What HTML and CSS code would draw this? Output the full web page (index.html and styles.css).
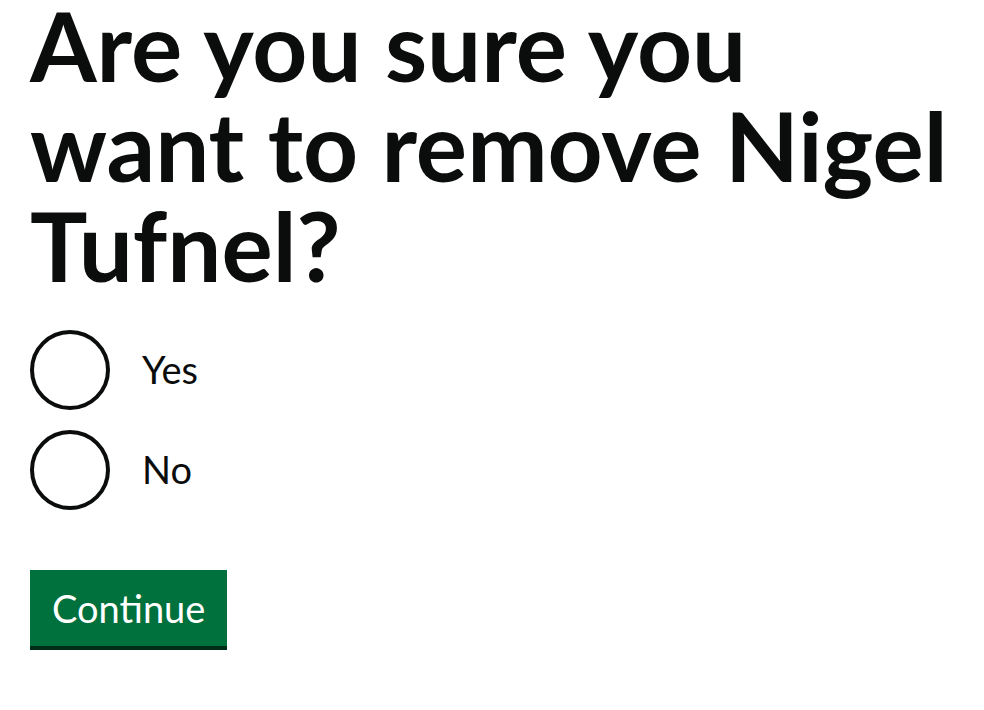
FILE: index.html
```html
<!DOCTYPE html>
<html lang="en">
<head>
<meta charset="utf-8">
<title>Remove Nigel Tufnel</title>
<link rel="stylesheet" href="styles.css">
</head>
<body>
<main class="page">
  <form class="form">
    <fieldset class="fieldset">
      <legend class="legend">
        <h1 class="heading">Are you sure you want to remove Nigel Tufnel?</h1>
      </legend>
      <div class="radios">
        <label class="radio">
          <input class="radio-input" type="radio" name="remove" value="yes">
          <span class="radio-circle"></span>
          <span class="radio-label">Yes</span>
        </label>
        <label class="radio">
          <input class="radio-input" type="radio" name="remove" value="no">
          <span class="radio-circle"></span>
          <span class="radio-label">No</span>
        </label>
      </div>
    </fieldset>
    <button class="button" type="button">Continue</button>
  </form>
</main>
</body>
</html>
```
FILE: styles.css
```css
* { box-sizing: border-box; }
html, body { margin: 0; padding: 0; background: #fff; }
body {
  font-family: Lato, "Noto Sans", sans-serif;
  color: #0b0c0c;
}
.page {
  padding: 0 30px;
}
.form { margin: 0; }
.fieldset {
  margin: 0 0 60px;
  padding: 0;
  border: 0;
  min-width: 0;
}
.legend {
  padding: 0;
  display: block;
  width: 100%;
}
.heading {
  margin: -5px 0 35px;
  font-size: 96px;
  font-weight: 700;
  line-height: 100px;
  color: #0b0c0c;
}
.radios {
  display: flex;
  flex-direction: column;
  gap: 20px;
}
.radio {
  display: flex;
  align-items: center;
  min-height: 80px;
  cursor: pointer;
}
.radio-input {
  position: absolute;
  opacity: 0;
  width: 0;
  height: 0;
  margin: 0;
}
.radio-circle {
  flex: 0 0 80px;
  width: 80px;
  height: 80px;
  border: 4px solid #0b0c0c;
  border-radius: 50%;
  background: #fff;
}
.radio-label {
  padding: 0 0 0 32px;
  font-size: 38px;
  line-height: 50px;
  position: relative;
  top: -1px;
}
.button {
  display: inline-block;
  margin: 0 0 4px;
  padding: 19px 22px 19px;
  border: 0;
  border-radius: 0;
  background: #00703c;
  box-shadow: 0 4px 0 #002d18;
  color: #fff;
  font-family: Lato, "Noto Sans", sans-serif;
  font-size: 38px;
  line-height: 38px;
  cursor: pointer;
}
```
